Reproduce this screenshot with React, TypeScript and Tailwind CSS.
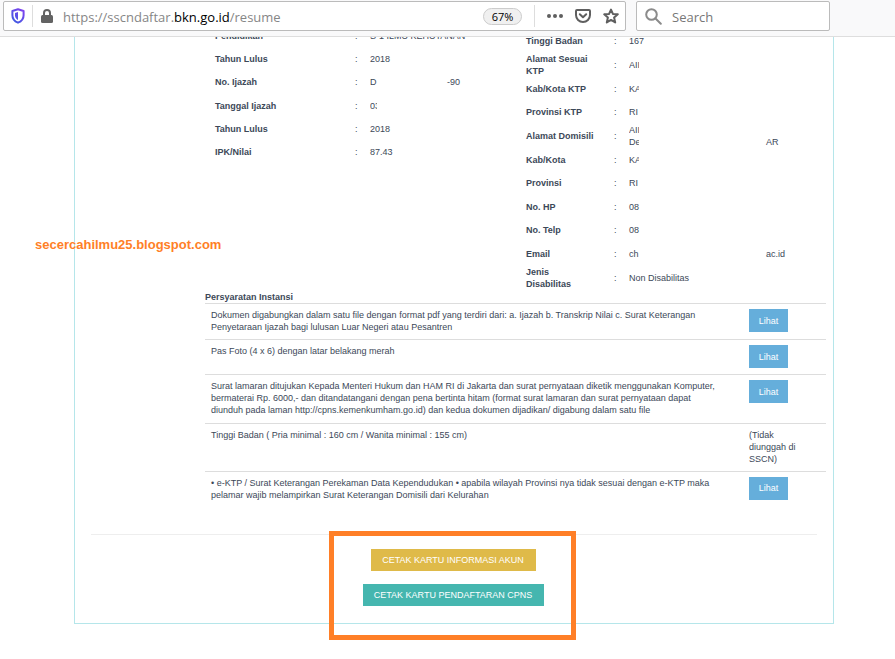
type Value = { head: string; tail?: string };
type Field = { label: string; lines: Value[]; mask?: string };

const educationFields: Field[] = [
  { label: "Pendidikan", lines: [{ head: "S-1 ILMU KEHUTANAN" }] },
  { label: "Tahun Lulus", lines: [{ head: "2018" }] },
  { label: "No. Ijazah", lines: [{ head: "D", tail: "-90" }] },
  { label: "Tanggal Ijazah", lines: [{ head: "03" }], mask: "w-[7px]" },
  { label: "Tahun Lulus", lines: [{ head: "2018" }] },
  { label: "IPK/Nilai", lines: [{ head: "87.43" }] },
];

const personalFields: Field[] = [
  { label: "Tinggi Badan", lines: [{ head: "167" }] },
  { label: "Alamat Sesuai KTP", lines: [{ head: "AII" }], mask: "w-[10px]" },
  { label: "Kab/Kota KTP", lines: [{ head: "KA" }], mask: "w-[10px]" },
  { label: "Provinsi KTP", lines: [{ head: "RI" }], mask: "w-[10px]" },
  { label: "Alamat Domisili", lines: [{ head: "AII" }, { head: "De", tail: "AR" }], mask: "w-[10px]" },
  { label: "Kab/Kota", lines: [{ head: "KA" }], mask: "w-[10px]" },
  { label: "Provinsi", lines: [{ head: "RI" }] },
  { label: "No. HP", lines: [{ head: "08" }] },
  { label: "No. Telp", lines: [{ head: "08" }] },
  { label: "Email", lines: [{ head: "ch", tail: "ac.id" }] },
  { label: "Jenis Disabilitas", lines: [{ head: "Non Disabilitas" }] },
];

const requirements = [
  {
    text: "Dokumen digabungkan dalam satu file dengan format pdf yang terdiri dari: a. Ijazah b. Transkrip Nilai c. Surat Keterangan Penyetaraan Ijazah bagi lulusan Luar Negeri atau Pesantren",
    uploaded: true,
  },
  { text: "Pas Foto (4 x 6) dengan latar belakang merah", uploaded: true },
  {
    text: "Surat lamaran ditujukan Kepada Menteri Hukum dan HAM RI di Jakarta dan surat pernyataan diketik menggunakan Komputer, bermaterai Rp. 6000,- dan ditandatangani dengan pena bertinta hitam (format surat lamaran dan surat pernyataan dapat diunduh pada laman http://cpns.kemenkumham.go.id) dan kedua dokumen dijadikan/ digabung dalam satu file",
    uploaded: true,
  },
  { text: "Tinggi Badan ( Pria minimal : 160 cm / Wanita minimal : 155 cm)", uploaded: false },
  {
    text: "• e-KTP / Surat Keterangan Perekaman Data Kependudukan • apabila wilayah Provinsi nya tidak sesuai dengan e-KTP maka pelamar wajib melampirkan Surat Keterangan Domisili dari Kelurahan",
    uploaded: true,
  },
];

const ShieldIcon = () => (
  <svg width="14" height="16" viewBox="0 0 14 16" fill="none">
    <defs>
      <linearGradient id="shield" x1="1" y1="14" x2="13" y2="1" gradientUnits="userSpaceOnUse">
        <stop stopColor="#3a5be0" />
        <stop offset="1" stopColor="#8440f0" />
      </linearGradient>
    </defs>
    <path
      d="M7 1.2 12.6 3v4.2c0 3.6-2.2 6.1-5.6 7.5C3.6 13.3 1.4 10.8 1.4 7.2V3Z"
      stroke="url(#shield)"
      strokeWidth="2"
      strokeLinejoin="round"
    />
    <path d="M7 4v8c-1.9-1-3-2.6-3-4.8V4.9Z" fill="url(#shield)" />
  </svg>
);

const LockIcon = () => (
  <svg width="12" height="14" viewBox="0 0 12 14" fill="none">
    <rect y="6" width="12" height="8" rx="1.5" fill="#636363" />
    <path d="M3 7V4a3 3 0 0 1 6 0v3" stroke="#636363" strokeWidth="2" />
  </svg>
);

const PocketIcon = () => (
  <svg width="16" height="14" viewBox="0 0 16 14" fill="none" stroke="#5f5f5f" strokeLinejoin="round">
    <path d="M2 1h12a1 1 0 0 1 1 1v4a7 7 0 0 1-14 0V2a1 1 0 0 1 1-1Z" strokeWidth="2" />
    <path d="m4.8 5.2 3.2 3 3.2-3" strokeWidth="2" strokeLinecap="round" />
  </svg>
);

const StarIcon = () => (
  <svg width="16" height="16" viewBox="0 0 16 16" fill="none">
    <path
      d="m8 1.6 1.9 4.3 4.9.4-3.7 3.2 1.100 4.900L8 11.900l-4.200 2.500 1.100-4.900L1.200 6.300l4.900-.4Z"
      stroke="#5f5f5f"
      strokeWidth="2"
      strokeLinejoin="round"
    />
  </svg>
);

const SearchIcon = () => (
  <svg width="17" height="17" viewBox="0 0 17 17" fill="none" stroke="#8b8b8b" strokeWidth="2">
    <circle cx="6.5" cy="6.5" r="5.3" />
    <path d="m10.5 10.5 5.3 5.3" strokeLinecap="round" />
  </svg>
);

const BrowserBar = () => (
  <header className="flex h-[37px] items-start border-b border-[#dedede] bg-[#f9f9fa] pt-px pl-[3px] font-['Open_Sans','Noto_Sans',sans-serif]">
    <div className="flex h-[30px] w-[623px] items-center rounded-xs border border-[#bbb] bg-white pr-1.5 pl-[7px]">
      <button type="button" aria-label="Tracking protection">
        <ShieldIcon />
      </button>
      <span className="ml-[7px] h-[22px] w-px bg-[#ddd]" />
      <button type="button" aria-label="Site information" className="ml-2">
        <LockIcon />
      </button>
      <div
        role="textbox"
        aria-label="Address"
        className="ml-[10px] flex-1 pt-0.5 text-[13px] leading-5 whitespace-nowrap text-[#868686]"
      >
        https://sscndaftar.<span className="text-black">bkn.go.id</span>/resume
      </div>
      <button
        type="button"
        className="h-[17px] w-[39px] rounded-full border border-[#ccc] bg-[#f0f0f0] text-[11px] leading-[15px] text-black"
      >
        67%
      </button>
      <span className="ml-3 h-[22px] w-px bg-[#ddd]" />
      <button type="button" aria-label="Page actions" className="ml-3">
        <svg width="16" height="4" viewBox="0 0 16 4" fill="#5f5f5f">
          <circle cx="2" cy="2" r="2" />
          <circle cx="8" cy="2" r="2" />
          <circle cx="14" cy="2" r="2" />
        </svg>
      </button>
      <button type="button" aria-label="Save to Pocket" className="ml-3">
        <PocketIcon />
      </button>
      <button type="button" aria-label="Bookmark this page" className="ml-3">
        <StarIcon />
      </button>
    </div>
    <label className="ml-[10px] flex h-[30px] w-[194px] items-center rounded-xs border border-[#bbb] bg-white pl-2">
      <SearchIcon />
      <input
        type="search"
        aria-label="Search"
        placeholder="Search"
        className="ml-[10px] min-w-0 flex-1 pt-0.5 text-[13px] leading-5 outline-none placeholder:text-[#777]"
      />
    </label>
  </header>
);

const FieldRow = ({ field, labelClass, headClass }: { field: Field; labelClass: string; headClass: string }) => (
  <tr>
    <th scope="row" className={`h-[23px] p-0 text-left align-middle font-bold ${labelClass}`}>
      {field.label}
    </th>
    <td className="w-[15px] p-0 align-middle">:</td>
    <td className="p-0 align-middle whitespace-nowrap">
      {field.lines.map((line, idx) => (
        <div key={idx} className="flex">
          <span className={line.tail ? headClass : ""}>
            <span className={field.mask ? `block overflow-hidden ${field.mask}` : "block"}>{line.head}</span>
          </span>
          {line.tail && <span>{line.tail}</span>}
        </div>
      ))}
    </td>
  </tr>
);

const App = () => {
  return (
    <div className="relative bg-white pb-9">
      <BrowserBar />
      <main className="mr-[61px] ml-[74px] overflow-hidden border border-t-0 border-[#b5e6ea] font-['Liberation_Sans',Arial,sans-serif] text-[9px] leading-3 text-[#3c4858]">
        {/* Data pelamar */}
        <div className="-mt-[13px] flex items-start pl-[140px]">
          <table className="h-[140px] w-[311px] table-fixed">
            <tbody>
              {educationFields.map((field, idx) => (
                <FieldRow key={idx} field={field} labelClass="w-[140px]" headClass="w-[77px]" />
              ))}
            </tbody>
          </table>
          <table className="mt-[5px] h-[261px] flex-1 table-fixed">
            <tbody>
              {personalFields.map((field, idx) => (
                <FieldRow key={idx} field={field} labelClass="w-[88px] pr-[19px]" headClass="w-[137px]" />
              ))}
            </tbody>
          </table>
        </div>

        {/* Persyaratan */}
        <section className="pr-[7px] pl-[130px]">
          <h2 className="pt-px font-bold">Persyaratan Instansi</h2>
          <table className="h-[204px] w-full">
            <tbody>
              {requirements.map((item, idx) => (
                <tr key={idx} className="border-t border-[#ddd] align-top">
                  <td className="pt-[5px] pr-7 pb-1.5 pl-1.5">{item.text}</td>
                  <td className="w-[77px] pt-[5px] pr-6 pb-1.5">
                    {item.uploaded ? (
                      <button type="button" className="block h-[23px] w-[39px] bg-[#65aedb] text-white">
                        Lihat
                      </button>
                    ) : (
                      "(Tidak diunggah di SSCN)"
                    )}
                  </td>
                </tr>
              ))}
            </tbody>
          </table>
        </section>

        <hr className="mx-4 mt-[27px] border-[#eee]" />
        <div className="flex flex-col items-center gap-[13px] pt-[14px] pr-0.5 pb-[17px]">
          <button type="button" className="h-[22px] w-[165px] bg-[#dfba49] text-white">
            CETAK KARTU INFORMASI AKUN
          </button>
          <button type="button" className="h-[22px] w-[181px] bg-[#45b6af] text-white">
            CETAK KARTU PENDAFTARAN CPNS
          </button>
        </div>
      </main>

      {/* Tanda di atas halaman */}
      <p className="absolute top-[237px] left-[35px] font-['Liberation_Sans',Arial,sans-serif] text-[13px] leading-4 font-bold text-[#ff7f27]">
        secercahilmu25.blogspot.com
      </p>
      <div className="pointer-events-none absolute top-[531px] left-[329px] h-[109px] w-[247px] border-5 border-[#ff7f27]" />
    </div>
  );
};

export default App;
